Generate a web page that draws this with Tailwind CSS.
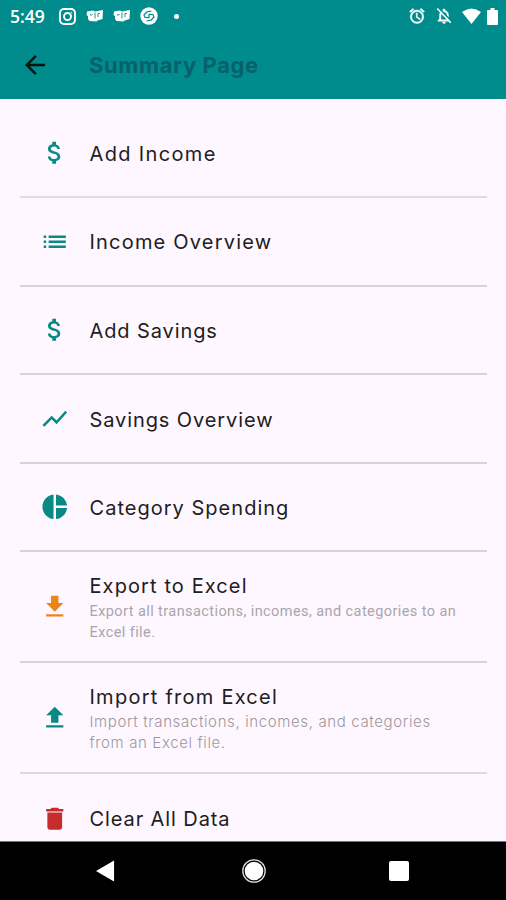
<!DOCTYPE html>
<html lang="en"><head><meta charset="utf-8"><title>Summary Page</title>
<script src="https://cdn.jsdelivr.net/npm/@tailwindcss/browser@4"></script></head>
<body class="font-['Inter',sans-serif]">
<div class="w-[506px] h-[900px] flex flex-col overflow-hidden bg-[#fef7ff]">
<header class="h-[98.500px] shrink-0 bg-[#008c8c]">
<div class="h-8 flex items-center text-white">
<span class="ml-[10px] w-[49px] font-['Open_Sans',sans-serif] font-semibold text-[17.500px] leading-8">5:49</span>
<svg class="w-[17px] h-[17px]" viewBox="0 0 17 17" fill="none" stroke="currentColor" stroke-width="1.9"><rect x="1" y="1" width="15" height="15" rx="4"/><circle cx="8.5" cy="8.5" r="3.5"/><circle cx="12.5" cy="4.5" r=".4" stroke-width="1"/></svg>
<svg class="ml-[10px] w-[18px] h-[14px]" viewBox="0 0 18 14"><path fill="currentColor" d="M1 2.500L7 1.500l2 1 8-1.500-.5 9-5 1.500-1 1-7-.5-1.500-2V7L.5 6z"/><path d="M4 5l1.200 1.500L6.500 5M12 8V4.500h2M9 3.500v6" fill="none" stroke="#008c8c" stroke-width=".9"/></svg>
<svg class="ml-[9px] w-[18px] h-[14px]" viewBox="0 0 18 14"><path fill="currentColor" d="M1 2.500L7 1.500l2 1 8-1.500-.5 9-5 1.500-1 1-7-.5-1.500-2V7L.5 6z"/><path d="M4 5l1.200 1.500L6.500 5M12 8V4.500h2M9 3.500v6" fill="none" stroke="#008c8c" stroke-width=".9"/></svg>
<svg class="ml-[9px] w-[18px] h-[18px]" viewBox="0 0 18 18"><circle cx="9" cy="9" r="8.7" fill="currentColor"/><path d="M11.500 4L7 4.800 4 8l1 2.500 4 .2V9M6.500 14l4.500-.8L14 10l-1-2.500-4-.2V9" fill="none" stroke="#008c8c" stroke-width="1.200"/></svg>
<span class="ml-[16px] size-[5px] rounded-full bg-white"></span>
<svg class="ml-[229px] size-[18px]" viewBox="0 0 24 24" fill="currentColor" stroke="currentColor" stroke-width=".6"><path d="M22 5.700l-4.600-3.900-1.300 1.500 4.600 3.900zM7.900 3.400L6.600 1.900 2 5.700l1.300 1.500zM12.500 8H11v6l4.700 2.900.8-1.200-4-2.400zM12 4a9 9 0 100 18 9 9 0 000-18zm0 16a7 7 0 110-14 7 7 0 010 14z"/></svg>
<svg class="ml-[9px] size-[18px]" viewBox="0 0 24 24"><path fill="currentColor" stroke="currentColor" stroke-width=".6" d="M12 22a2 2 0 002-2h-4a2 2 0 002 2zM6 11v5l-2 2v1h16v-1l-2-2v-5c0-3.100-1.600-5.600-4.500-6.300V4a1.500 1.500 0 00-3 0v.7C7.600 5.400 6 7.900 6 11zm2 0c0-2.500 1.500-4.500 4-4.500s4 2 4 4.500v6H8z"/><path d="M5 1l18 19" stroke="#008c8c" stroke-width="2"/><path d="M3 2l18 19" stroke="currentColor" stroke-width="2"/></svg>
<svg class="ml-[9px] w-[19px] h-[16px]" viewBox="0 0 19 16"><path fill="currentColor" d="M0 4Q9.500-3 19 4L9.500 16z"/></svg>
<svg class="ml-[6px] w-[11px] h-[17px]" viewBox="0 0 11 17"><path fill="currentColor" d="M3.500 0h4v2H10q1 0 1 1v13q0 1-1 1H1q-1 0-1-1V3q0-1 1-1h2.500z"/></svg>
</div>
<div class="h-[65px] flex items-center">
<svg class="ml-5 size-[30px]" viewBox="0 0 24 24"><path fill="#071414" d="M20 11H7.830l5.590-5.590L12 4l-8 8 8 8 1.410-1.410L7.830 13H20z"/></svg>
<h1 class="ml-[39px] font-bold text-[22px] leading-[30px] text-[#07606a] whitespace-nowrap tracking-[0.6px]">Summary Page</h1>
</div>
</header>
<main class="flex-1 min-h-0 overflow-hidden pl-5 pr-[19px] pt-[11px] text-[#202020] text-[20px] font-[430] whitespace-nowrap">
<div class="h-[88.600px] flex items-center border-b-2 border-[#e1dae3]"><svg class="ml-5 mr-5 size-[29.500px] text-[#078985]" viewBox="0 0 24 24" fill="currentColor"><path d="M11.800 10.900c-2.270-.59-3-1.200-3-2.150 0-1.090 1.010-1.850 2.700-1.850 1.780 0 2.440.85 2.500 2.100h2.210c-.07-1.720-1.120-3.300-3.210-3.810V3h-3v2.160c-1.940.42-3.500 1.680-3.500 3.610 0 2.310 1.910 3.460 4.700 4.130 2.500.6 3 1.480 3 2.410 0 .69-.49 1.790-2.700 1.790-2.060 0-2.870-.92-2.980-2.100h-2.200c.12 2.190 1.760 3.420 3.680 3.830V21h3v-2.150c1.950-.37 3.500-1.500 3.500-3.550 0-2.840-2.430-3.810-4.700-4.400z"/></svg><span class="pt-[2px] tracking-[1.35px]">Add Income</span></div>
<div class="h-[88.600px] flex items-center border-b-2 border-[#d8d1da]"><svg class="ml-5 mr-5 size-[29.500px] text-[#078985]" viewBox="0 0 24 24" fill="currentColor"><path d="M3 7h2v2H3zm0 4h2v2H3zm0 4h2v2H3zM7 7h14v2H7zm0 4h14v2H7zm0 4h14v2H7z"/></svg><span class="pt-[2px] tracking-[1.2px]">Income Overview</span></div>
<div class="h-[88.600px] flex items-center border-b-2 border-[#d8d1da]"><svg class="ml-5 mr-5 size-[29.500px] text-[#078985]" viewBox="0 0 24 24" fill="currentColor"><path d="M11.800 10.900c-2.270-.59-3-1.200-3-2.150 0-1.090 1.010-1.850 2.700-1.850 1.780 0 2.440.85 2.500 2.100h2.210c-.07-1.720-1.120-3.300-3.210-3.810V3h-3v2.160c-1.940.42-3.500 1.680-3.500 3.610 0 2.310 1.910 3.460 4.700 4.130 2.500.6 3 1.480 3 2.410 0 .69-.49 1.790-2.700 1.790-2.060 0-2.870-.92-2.980-2.100h-2.200c.12 2.190 1.760 3.420 3.680 3.830V21h3v-2.150c1.950-.37 3.500-1.500 3.500-3.550 0-2.840-2.430-3.810-4.700-4.400z"/></svg><span class="pt-[2px] tracking-[0.9px]">Add Savings</span></div>
<div class="h-[88.600px] flex items-center border-b-2 border-[#d8d1da]"><svg class="ml-5 mr-5 size-[29.500px] text-[#078985]" viewBox="0 0 24 24" fill="currentColor"><path d="M3.500 18.490l6-6.010 4 4L22 6.920l-1.410-1.410-7.090 7.970-4-4L2 16.990z"/></svg><span class="pt-[2px] tracking-[0.9px]">Savings Overview</span></div>
<div class="h-[88.600px] flex items-center border-b-2 border-[#d8d1da]"><svg class="ml-5 mr-5 size-[29.500px] text-[#078985]" viewBox="0 0 24 24" fill="currentColor"><path d="M11 2v20c-5.070-.5-9-4.790-9-10s3.930-9.500 9-10zm2.030 0v8.990H22c-.47-4.740-4.240-8.520-8.970-8.990zm0 11.010V22c4.740-.47 8.500-4.250 8.970-8.990z"/></svg><span class="pt-[2px] tracking-[1.02px]">Category Spending</span></div>
<div class="h-[111px] flex items-center border-b-2 border-[#d8d1da]"><svg class="ml-5 mr-5 size-[29.500px] text-[#ed8417]" viewBox="0 0 24 24" fill="currentColor"><path d="M19 9h-4V3H9v6H5l7 7zM5 18v2h14v-2z"/></svg><div class="pt-[2px]"><div class="leading-[28px] tracking-[1.1px]"><span>Export to Excel</span></div><div class="pt-px font-['Roboto',sans-serif] font-normal text-[14.500px] leading-[21px] text-[#aaa5ac] tracking-[0.42px]"><span>Export all transactions, incomes, and categories to an</span><br><span>Excel file.</span></div></div></div>
<div class="h-[110.500px] flex items-center border-b-2 border-[#dfd8e1]"><svg class="ml-5 mr-5 size-[29.500px] text-[#078985]" viewBox="0 0 24 24" fill="currentColor"><path d="M9 16h6v-6h4l-7-7-7 7h4zm-4 2h14v2H5z"/></svg><div class="pt-px"><div class="leading-[28px] tracking-[1.25px]"><span>Import from Excel</span></div><div class="font-light text-[15px] leading-[21px] text-[#9c979e] tracking-[0.63px]"><span>Import transactions, incomes, and categories</span><br><span>from an Excel file.</span></div></div></div>
<div class="h-[88.600px] flex items-center"><svg class="ml-5 mr-5 size-[29.500px] text-[#c62c2e]" viewBox="0 0 24 24" fill="currentColor"><path d="M6 19c0 1.100.9 2 2 2h8c1.100 0 2-.9 2-2V7H6zM19 4h-3.500l-1-1h-5l-1 1H5v2h14z"/></svg><span class="pt-px tracking-[0.9px]">Clear All Data</span></div>
</main>
<nav class="h-[59px] shrink-0 bg-black border-t border-[#777] flex items-center">
<svg class="ml-[96px] w-[19px] h-[22px]" viewBox="0 0 20 22"><path d="M0 11L19 0v22z" fill="white"/></svg>
<svg class="ml-[127px] size-6" viewBox="0 0 24 24"><circle cx="12" cy="12" r="11.200" fill="none" stroke="#ddd" stroke-width="1.300"/><circle cx="12" cy="12" r="9.300" fill="white"/></svg>
<span class="ml-[123px] size-5 bg-white rounded-[2px]"></span>
</nav>
</div></body></html>
